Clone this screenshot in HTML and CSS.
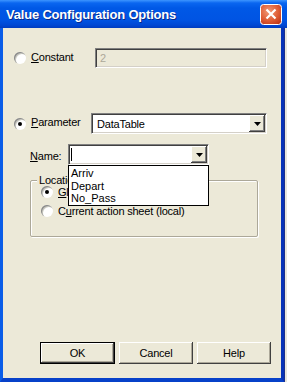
FILE: index.html
```html
<!DOCTYPE html>
<html lang="en">

<head>
    <meta charset="UTF-8">
    <meta name="viewport" content="width=device-width, initial-scale=1.0">
    <title>Value Configuration Options</title>
    <link rel="stylesheet" href="styles.css">
</head>

<body>
    <div class="dialog">
        <div class="titlebar">
            <span class="title">Value Configuration Options</span>
            <span class="close">
                <svg width="22" height="21" viewBox="0 0 22 21">
                    <defs>
                        <radialGradient id="redfill" cx="40%" cy="35%" r="75%">
                            <stop offset="0" stop-color="#f19a78" />
                            <stop offset="0.6" stop-color="#df5d35" />
                            <stop offset="1" stop-color="#c1381a" />
                        </radialGradient>
                    </defs>
                    <rect x="0.5" y="0.5" width="21" height="20" rx="3" fill="url(#redfill)" stroke="#ffffff" />
                    <path d="M6.5 5.5 L15.5 14.5 M15.5 5.5 L6.5 14.5" stroke="#ffffff" stroke-width="2.2" />
                </svg>
            </span>
        </div>
        <div class="client">
            <div class="row row-constant">
                <span class="radio"></span>
                <span class="lbl lbl-constant"><u>C</u>onstant</span>
                <span class="edit disabled">2</span>
            </div>
            <div class="row row-param">
                <span class="radio checked"></span>
                <span class="lbl lbl-param"><u>P</u>arameter</span>
                <div class="combo combo-param">
                    <span class="combo-text">DataTable</span>
                    <span class="arrow"><svg width="7" height="4" viewBox="0 0 7 4"><path d="M0 0 H7 L3.5 4 Z" fill="#000" /></svg></span>
                </div>
            </div>
            <div class="row row-name">
                <span class="lbl lbl-name"><u>N</u>ame:</span>
                <div class="combo combo-name">
                    <span class="combo-text"><span class="caret"></span></span>
                    <span class="arrow"><svg width="7" height="4" viewBox="0 0 7 4"><path d="M0 0 H7 L3.5 4 Z" fill="#000" /></svg></span>
                    <div class="list">
                        <div>Arriv</div>
                        <div>Depart</div>
                        <div>No_Pass</div>
                    </div>
                </div>
            </div>
            <div class="group">
                <span class="group-label">Location</span>
                <div class="row row-global">
                    <span class="radio checked"></span>
                    <span class="lbl"><u>G</u>lobal sheet</span>
                </div>
                <div class="row row-local">
                    <span class="radio"></span>
                    <span class="lbl">C<u>u</u>rrent action sheet (local)</span>
                </div>
            </div>
            <div class="buttons">
                <span class="btn default">OK</span>
                <span class="btn">Cancel</span>
                <span class="btn">Help</span>
            </div>
        </div>
    </div>
    <div class="behind">
        <div class="behind-title"></div>
        <div class="behind-body"></div>
    </div>
</body>

</html>
```

FILE: styles.css
```css
body {
    margin: 0;
    width: 287px;
    height: 382px;
    overflow: hidden;
    display: flex;
    font-family: "Liberation Sans", Arial, sans-serif;
    font-size: 11px;
    letter-spacing: -0.2px;
    color: #000;
    background-color: #ece9d8;
}

.dialog {
    width: 284px;
    height: 382px;
    display: flex;
    flex-direction: column;
}

.titlebar {
    height: 28px;
    flex: none;
    display: flex;
    align-items: center;
    padding: 0 2px 0 6px;
    background: linear-gradient(#3d95ff 0, #0a66f0 3px, #0058e6 8px, #0054e3 20px, #0048d4 25px, #003cc0 28px);
}

.title {
    flex: 1;
    color: #fff;
    font-weight: bold;
    font-size: 13px;
    letter-spacing: -0.2px;
    text-shadow: 1px 1px 0 #0a2a8a;
}

.close {
    width: 22px;
    height: 21px;
    display: flex;
}

.client {
    flex: 1;
    display: flex;
    flex-direction: column;
    background-color: #ece9d8;
    border-left: 3px solid #0a5de8;
    border-right: 3px solid #0733b8;
    border-bottom: 4px solid #0741c9;
}

.row {
    display: flex;
    align-items: center;
}

.radio {
    width: 12px;
    height: 12px;
    flex: none;
    border-radius: 50%;
    background-color: #fff;
    box-shadow: inset 1px 1px 0 #8a8a8a, inset 2px 2px 0 #c8c8c0;
    display: flex;
    align-items: center;
    justify-content: center;
}

.radio.checked::after {
    content: "";
    width: 4px;
    height: 4px;
    border-radius: 50%;
    background-color: #000;
}

.lbl {
    margin-left: 5px;
    white-space: nowrap;
}

.row-constant {
    margin-top: 20px;
    height: 20px;
    padding-left: 11px;
}

.lbl-constant {
    width: 64px;
    margin-top: -2px;
}

.edit {
    width: 172px;
    height: 20px;
    box-sizing: border-box;
    border: 1px solid;
    border-color: #808080 #fff #fff #808080;
    box-shadow: inset 1px 1px 0 #404040, inset -1px -1px 0 #d4d0c8;
    padding: 0 4px;
    line-height: 18px;
}

.edit.disabled {
    color: #aca899;
    background-color: #ece9d8;
}

.row-param {
    margin-top: 45px;
    height: 21px;
    padding-left: 11px;
}

.lbl-param {
    width: 60px;
    margin-top: -3px;
}

.combo {
    position: relative;
    height: 21px;
    box-sizing: border-box;
    display: flex;
    align-items: center;
    background-color: #fff;
    border: 1px solid;
    border-color: #808080 #fff #fff #808080;
    box-shadow: inset 1px 1px 0 #404040, inset -1px -1px 0 #d4d0c8;
    padding: 1px;
}

.combo-param {
    width: 176px;
}

.combo-text {
    flex: 1;
    padding-left: 4px;
    display: flex;
    align-items: center;
}

.arrow {
    width: 16px;
    height: 17px;
    display: flex;
    align-items: center;
    justify-content: center;
    background-color: #ece9d8;
    box-shadow: inset -1px -1px 0 #404040, inset 1px 1px 0 #fff, inset -2px -2px 0 #808080, inset 2px 2px 0 #ece9d8;
}

.row-name {
    margin-top: 10px;
    height: 21px;
    padding-left: 27px;
}

.lbl-name {
    margin-left: 0;
    width: 38px;
    margin-top: 3px;
}

.combo-name {
    width: 141px;
}

.combo-name .combo-text {
    padding-left: 1px;
}

.caret {
    width: 1px;
    height: 13px;
    background-color: #000;
}

.list {
    position: absolute;
    top: calc(100% + 1px);
    left: -1px;
    width: 141px;
    box-sizing: border-box;
    border: 1px solid #000;
    background-color: #fff;
    padding: 1px 0 0 2px;
    line-height: 12.5px;
    letter-spacing: 0;
    z-index: 2;
}

.group {
    margin: 15px 0 0 27px;
    width: 228px;
    height: 57px;
    box-sizing: border-box;
    border: 1px solid #aca899;
    border-radius: 2px;
    box-shadow: inset 1px 1px 0 #fff, 1px 1px 0 #fff;
    display: flex;
    flex-direction: column;
}

.group-label {
    align-self: flex-start;
    margin: -7px 0 0 6px;
    padding: 0 2px;
    line-height: 12px;
    background-color: #ece9d8;
}

.row-global {
    margin-top: -2px;
    height: 16px;
    padding-left: 10px;
}

.row-local {
    margin-top: 3px;
    height: 16px;
    padding-left: 10px;
}

.buttons {
    margin-top: auto;
    margin-bottom: 14px;
    padding-left: 37px;
    display: flex;
    gap: 4px;
}

.btn {
    width: 74px;
    height: 22px;
    box-sizing: border-box;
    display: flex;
    align-items: center;
    justify-content: center;
    background-color: #ece9d8;
    box-shadow: inset -1px -1px 0 #404040, inset 1px 1px 0 #fff, inset -2px -2px 0 #aca899;
}

.btn.default {
    width: 75px;
    border: 1px solid #000;
}

.behind {
    width: 3px;
    display: flex;
    flex-direction: column;
}

.behind-title {
    height: 28px;
    background: linear-gradient(#3d95ff 0, #0a66f0 3px, #0058e6 8px, #0054e3 20px, #0048d4 25px, #003cc0 28px);
}

.behind-body {
    flex: 1;
    background-color: #e8e6dc;
    border-left: 1px solid #1c2f8c;
}
```
